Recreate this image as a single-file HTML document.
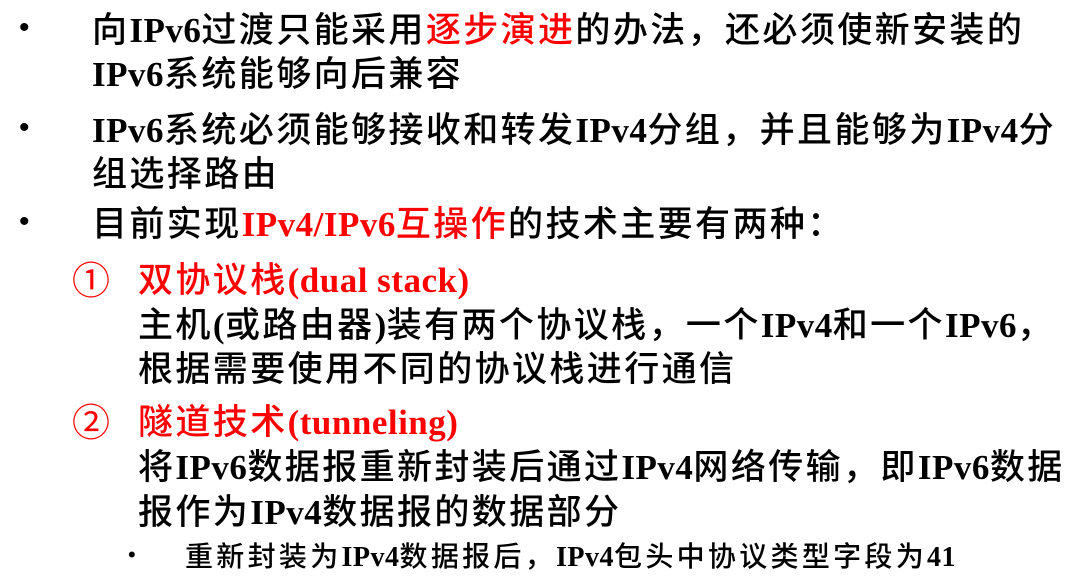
<!DOCTYPE html>
<html><head><meta charset="utf-8"><style>
html,body{margin:0;padding:0;background:#fff;width:1092px;height:583px;overflow:hidden}
.l{position:absolute;white-space:nowrap;font-family:"Noto Sans CJK SC","WenQuanYi Zen Hei",sans-serif;font-size:35px;line-height:44px;font-weight:500;color:#000;letter-spacing:2.4px}
.e{font-family:"Liberation Serif",serif;font-weight:bold;font-size:35px;letter-spacing:0.5px}
.r{color:#f00}
.s{font-size:28px;letter-spacing:3.3px}
.s .e{font-size:28px}
.b{position:absolute;font-family:"Liberation Sans",sans-serif;font-size:30px;line-height:44px}
.c{position:absolute;color:#f00;font-family:"Noto Sans CJK SC",sans-serif;font-size:38px;line-height:44px}
</style></head><body>
<div class="b" style="left:19px;top:6px">•</div>
<div class="l" style="left:92px;top:6px">向<span class="e">IPv6</span>过渡只能采用<span class="r">逐步演进</span>的办法，还必须使新安装的</div>
<div class="l" style="left:92px;top:50px"><span class="e">IPv6</span>系统能够向后兼容</div>
<div class="b" style="left:19px;top:106px">•</div>
<div class="l" style="left:92px;top:106px"><span class="e">IPv6</span>系统必须能够接收和转发<span class="e">IPv4</span>分组，并且能够为<span class="e">IPv4</span>分</div>
<div class="l" style="left:92px;top:150px">组选择路由</div>
<div class="b" style="left:19px;top:200px">•</div>
<div class="l" style="left:92px;top:200px">目前实现<span class="r"><span class="e">IPv4/IPv6</span>互操作</span>的技术主要有两种：</div>
<div class="c" style="left:72px;top:256px">①</div>
<div class="l r" style="left:138px;top:256px">双协议栈<span class="e">(dual stack)</span></div>
<div class="l" style="left:138px;top:301px">主机<span class="e">(</span>或路由器<span class="e">)</span>装有两个协议栈，一个<span class="e">IPv4</span>和一个<span class="e">IPv6</span>，</div>
<div class="l" style="left:138px;top:345px">根据需要使用不同的协议栈进行通信</div>
<div class="c" style="left:72px;top:398px">②</div>
<div class="l r" style="left:138px;top:398px">隧道技术<span class="e">(tunneling)</span></div>
<div class="l" style="left:138px;top:443px">将<span class="e">IPv6</span>数据报重新封装后通过<span class="e">IPv4</span>网络传输，即<span class="e">IPv6</span>数据</div>
<div class="l" style="left:138px;top:488px">报作为<span class="e">IPv4</span>数据报的数据部分</div>
<div class="b" style="left:128px;top:533px;font-size:22px">•</div>
<div class="l s" style="left:185px;top:533px">重新封装为<span class="e">IPv4</span>数据报后，<span class="e">IPv4</span>包头中协议类型字段为<span class="e">41</span></div>
</body></html>
